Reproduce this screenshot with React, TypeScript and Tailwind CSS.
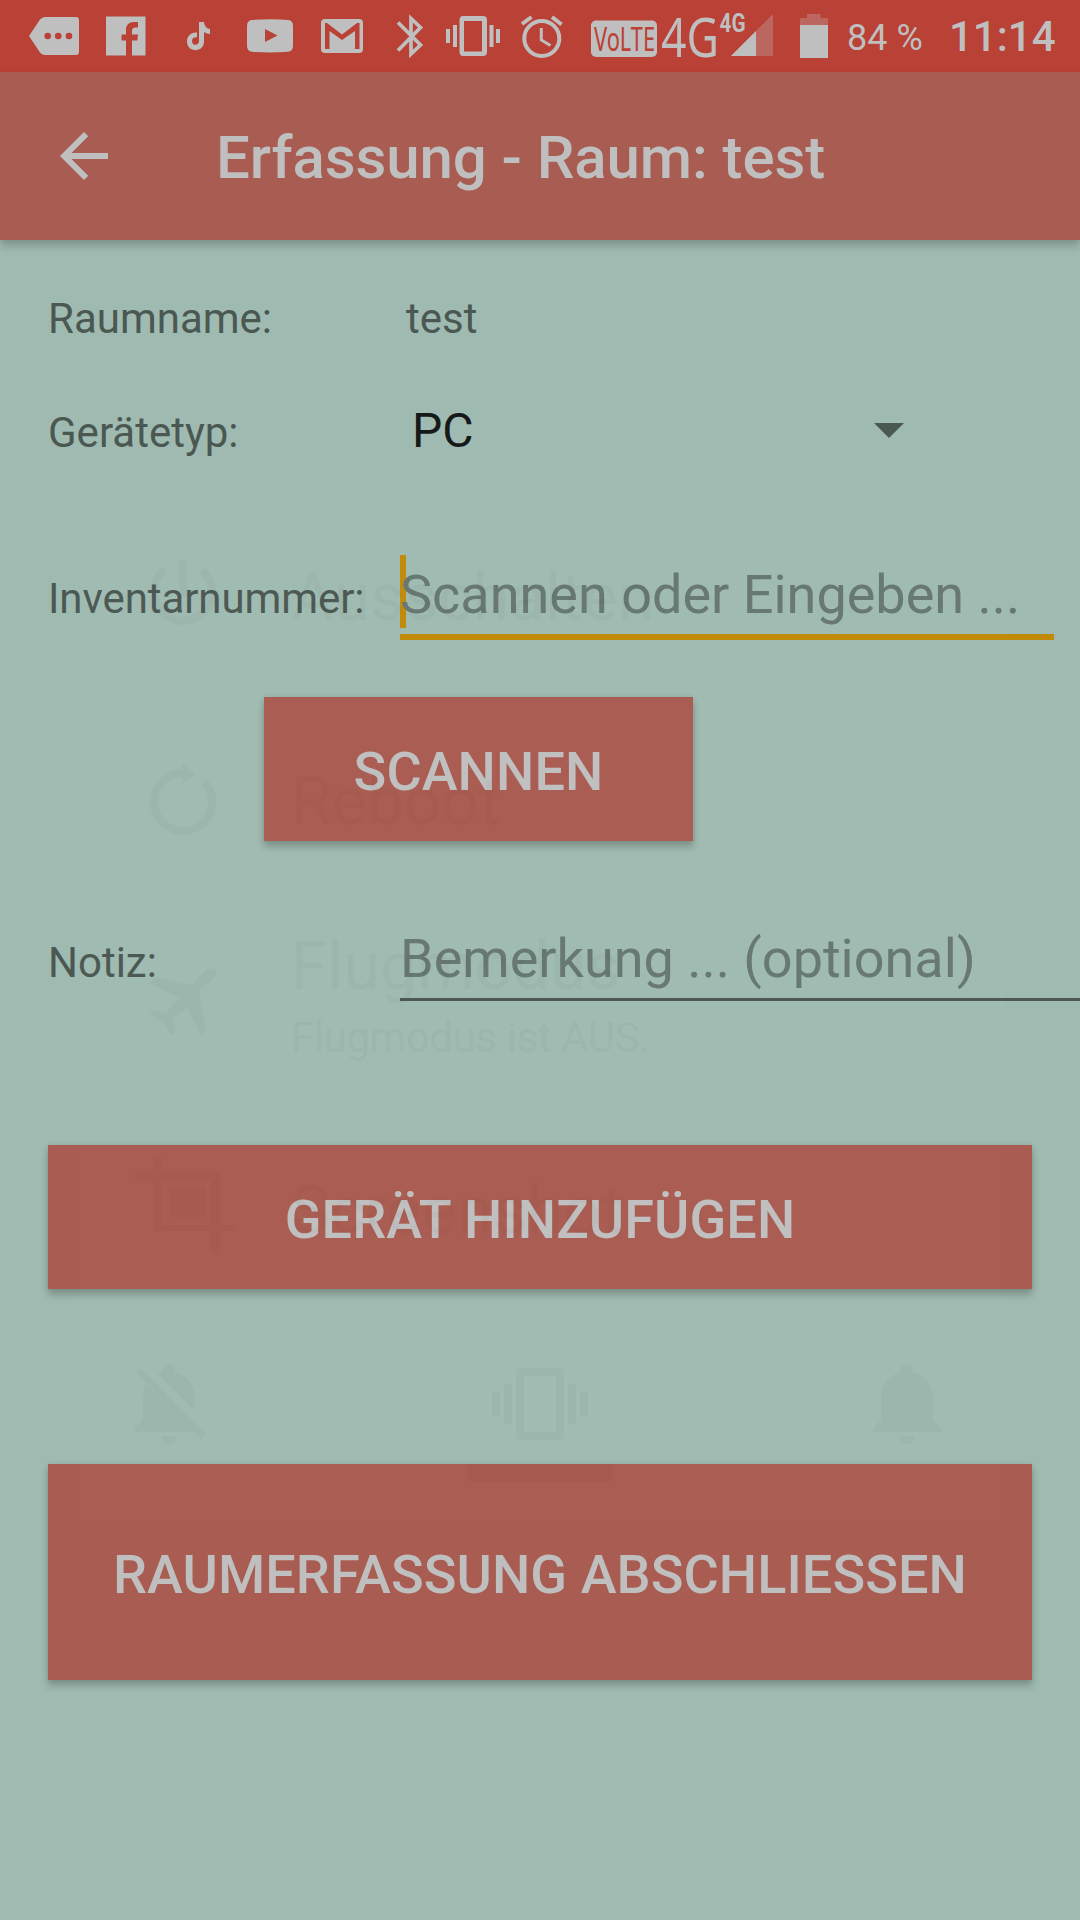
import React from "react";

const LIGHT = "#bfbfbf";
const RED = "#b94136";

function Slot({ x, w, children }: { x: number; w: number; children: React.ReactNode }) {
  return (
    <svg className="shrink-0 overflow-visible" width={w} height={72} viewBox={`${x} 0 ${w} 72`} fill={LIGHT}>
      {children}
    </svg>
  );
}

function StatusBar() {
  return (
    <div className="flex h-[72px] bg-[#b94136]">
      <Slot x={0} w={96}>
        <path d="M29 36 40 19.5Q42 17 45 17H76Q79 17 79 20V52Q79 55 76 55H45Q42 55 40 52.5Z" />
        <g fill={RED}>
          <circle cx="47.7" cy="36" r="3.3" />
          <circle cx="58.2" cy="36" r="3.3" />
          <circle cx="69" cy="36" r="3.3" />
        </g>
      </Slot>
      <Slot x={96} w={64}>
        <path d="M106 16.5H145.5V55.5H132V40.5H137.3L138 34.5H132V31Q132 27.5 135.500 27.5H138V22H134Q126 22 126 30V34.5H121.5V40.5H126V55.5H106Z" />
      </Slot>
      <Slot x={160} w={70}>
        <path d="M199 22H204C204.4 26 206.5 28.6 210 29V34C207.8 34 205.8 33.3 204 32V41.5C204 53 187 53 187 41.5C187 35.5 191.5 32 197 32.5V37.5C194 36.8 192 38.6 192 41.2C192 46.2 199 46 199 41Z" />
      </Slot>
      <Slot x={230} w={76}>
        <path d="M252 20Q270 18.5 288 20Q293 20.5 293 26V46Q293 51 288 51.8Q270 53 252 51.8Q247 51 247 46V26Q247 20.5 252 20Z" />
        <path d="M265 29V42L277.5 35.5Z" fill={RED} />
      </Slot>
      <Slot x={306} w={74}>
        <rect x="321" y="19" width="42" height="34" rx="4" />
        <path d="M325 49V23H327L342 34.5 357 23H359.5V49H355V31L342 40 329.5 31V49Z" fill={RED} />
      </Slot>
      <Slot x={380} w={60}>
        <path
          d="M398 22.5 420.5 45 411 54V18.500L420.5 27.5 398 50.5"
          fill="none"
          stroke={LIGHT}
          strokeWidth="3.7"
        />
      </Slot>
      <Slot x={440} w={70}>
        <path
          fillRule="evenodd"
          d="M463 16H483Q487 16 487 20V52Q487 56 483 56H463Q459.5 56 459.5 52V20Q459.5 16 463 16ZM464 21V51.5H482V21Z"
        />
        <path d="M453 25h4v22h-4zM446 29h4v14h-4zM489.5 25h4v22h-4zM496 29h4v14h-4z" />
      </Slot>
      <Slot x={510} w={70}>
        <g fill="none" stroke={LIGHT} strokeWidth="4">
          <circle cx="541.8" cy="38.5" r="17.5" />
          <path d="M541.3 28V40L550.5 45.5" strokeWidth="3" />
          <path d="M522 24 531.5 17M552 17 561.5 24.5" />
        </g>
      </Slot>
      <Slot x={580} w={79}>
        <rect x="591" y="20.5" width="66" height="36.5" rx="5" />
        <text
          x="594"
          y="51"
          fill={RED}
          fontSize="32"
          textLength="61"
          lengthAdjust="spacingAndGlyphs"
          className="font-['Noto_Sans',sans-serif]"
        >
          VoLTE
        </text>
      </Slot>
      <Slot x={659} w={60}>
        <text
          x="661"
          y="57"
          fontSize="55"
          textLength="58"
          lengthAdjust="spacingAndGlyphs"
          className="font-['Noto_Sans',sans-serif]"
        >
          4G
        </text>
      </Slot>
      <Slot x={719} w={66}>
        <path d="M773 14V56H731Z" fillOpacity=".3" />
        <path d="M756 31V56H731Z" />
        <text
          x="719.5"
          y="32"
          fontSize="25"
          fontWeight="700"
          textLength="26"
          lengthAdjust="spacingAndGlyphs"
          className="font-['Roboto',sans-serif]"
        >
          4G
        </text>
      </Slot>
      <Slot x={785} w={62}>
        <path d="M800 18H807V14H820.5V18H828V25H800Z" fillOpacity=".3" />
        <path d="M800 25H828V58H800Z" />
      </Slot>
      <div className="mt-[17px] w-[102px] text-[36px] leading-[42px] text-[#bfbfbf]">84 %</div>
      <div className="mt-[12px] text-[42px] font-medium leading-[50px] text-[#bfbfbf]">11:14</div>
    </div>
  );
}

const button =
  "flex items-center justify-center bg-[#a95c51] pt-[5px] text-[54px] font-medium leading-none tracking-[0.08px] text-[#bfbfbf] shadow-[0_6px_7px_rgba(0,0,0,0.2),0_0_5px_rgba(0,0,0,0.1)]";

const ghostText = "absolute left-[291px] whitespace-nowrap leading-none";

function PowerMenuGhost() {
  return (
    <div className="pointer-events-none absolute left-[75px] top-[467px] h-[1056px] w-[930px] rounded-[6px] bg-white/[0.014]">
      <div className="absolute -left-[75px] -top-[467px] text-[66px] text-black opacity-[0.018]">
        <div className={`${ghostText} top-[565px]`}>Ausschalten</div>
        <div className={`${ghostText} top-[769px]`}>Reboot</div>
        <div className={`${ghostText} top-[934px]`}>Flugmodus</div>
        <div className={`${ghostText} top-[1017px] text-[42px] tracking-[-0.4px]`}>Flugmodus ist AUS.</div>
        <div className={`${ghostText} top-[1178px]`}>Screenshot</div>
        <svg width="1080" height="1600" viewBox="0 0 1080 1600" className="block max-w-none">
          <g fill="none" stroke="#000" strokeWidth="8">
            <path d="M183 560V597M164 570A29 29 0 1 0 202 570" />
            <path d="M184 773A29 29 0 1 0 204 782" />
          </g>
          <path d="M182 763V785L195 774Z" />
          <path d="M216 970Q209 966 203 973L192 985 155 977 150 983 179 998 166 1013 153 1010 150 1014 163 1022 171 1035 175 1032 173 1019 187 1007 201 1035 206 1030 199 991 213 979Q219 973 216 970Z" />
          <path
            fillRule="evenodd"
            d="M153 1157H161V1172H220V1225H235V1231H220V1254H211V1231H153V1181H135V1172H153ZM161 1181V1225H211V1181ZM169 1187H206V1217H169Z"
          />
          <path d="M901 1370Q901 1364 907 1364T913 1370V1372Q933 1378 933 1400V1420L941 1428V1432H873V1428L881 1420V1400Q881 1378 901 1372ZM899 1436H915Q914 1444 907 1444T899 1436Z" />
          <path d="M163 1370Q163 1364 169 1364T175 1370V1372Q195 1378 195 1400V1411L157 1374 163 1372ZM146 1384 194 1432H135V1428L143 1420V1400Q143 1390 146 1384ZM136 1372 140 1368 206 1434 201 1439ZM161 1436H177Q176 1444 169 1444T161 1436Z" />
          <path
            fillRule="evenodd"
            d="M520 1368H560Q564 1368 564 1372V1436Q564 1440 560 1440H520Q516 1440 516 1436V1372Q516 1368 520 1368ZM524 1376V1432H556V1376Z"
          />
          <path d="M504 1384h8v40h-8zM492 1392h8v24h-8zM568 1384h8v40h-8zM580 1392h8v24h-8zM468 1464h144v18h-144z" />
        </svg>
      </div>
    </div>
  );
}

export default function App() {
  return (
    <div className="relative h-[1920px] w-[1080px] overflow-hidden bg-[#9fbab1] font-['Roboto',sans-serif] text-[42px] leading-none text-[#4b5852]">
      <StatusBar />
      <header className="flex h-[168px] items-center bg-[#a95c51] pl-12 text-[#bfbfbf] shadow-[0_5px_9px_rgba(0,0,0,0.24)]">
        <svg width="72" height="72" viewBox="0 0 24 24" fill="currentColor">
          <path d="M20 11H7.83l5.59-5.59L12 4l-8 8 8 8 1.41-1.41L7.83 13H20v-2z" />
        </svg>
        <h1 className="ml-24 pt-[4px] text-[60px] font-medium tracking-[-0.1px]">Erfassung - Raum: test</h1>
      </header>
      <main>
        <div className="mt-[58px] flex h-[41px] pl-12">
          <div className="w-[358px]">Raumname:</div>
          <div>test</div>
        </div>
        <div className="mt-[68px] flex h-[52px] items-baseline pl-12">
          <div className="w-[364px]">Gerätetyp:</div>
          <div className="w-[462px] text-[48px] text-[#151918]">PC</div>
          <svg className="mb-[5px] self-center" width="30" height="15" viewBox="0 0 30 15" fill="currentColor">
            <path d="M0 0H30L15 15Z" />
          </svg>
        </div>
        <div className="mt-[96px] flex h-[85px] items-baseline pl-12">
          <div className="w-[352px] tracking-[-0.08px]">Inventarnummer:</div>
          <div className="relative h-[85px] w-[654px] border-b-[6px] border-[#c18a08] pt-[13px] text-[54px] text-[#657770]">
            <span className="absolute left-0 top-0 h-[73px] w-[6px] bg-[#c18a08]" />
            <span className="relative">Scannen oder Eingeben ...</span>
          </div>
        </div>
        <div className={`${button} ml-[264px] mt-[57px] h-[144px] w-[429px]`}>SCANNEN</div>
        <div className="mt-[78px] flex h-[82px] items-baseline pl-12">
          <div className="w-[352px]">Notiz:</div>
          <div className="h-[82px] w-[680px] shrink-0 border-b-[3px] border-[#4b5852] pt-[13px] text-[54px] text-[#657770]">
            Bemerkung ... (optional)
          </div>
        </div>
        <div className={`${button} mx-12 mt-[144px] h-[144px]`}>GERÄT HINZUFÜGEN</div>
        <div className={`${button} mx-12 mt-[175px] h-[216px]`}>RAUMERFASSUNG ABSCHLIESSEN</div>
      </main>
      <PowerMenuGhost />
    </div>
  );
}
